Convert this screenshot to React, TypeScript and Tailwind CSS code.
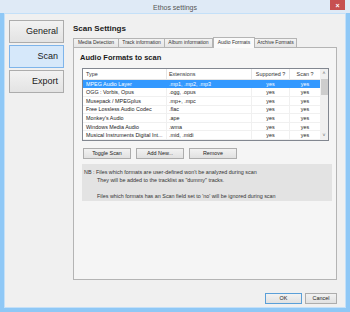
const rows = [
  { type: 'MPEG Audio Layer', ext: '.mp1, .mp2, .mp3' },
  { type: 'OGG : Vorbis, Opus', ext: '.ogg, .opus' },
  { type: 'Musepack / MPEGplus', ext: '.mp+, .mpc' },
  { type: 'Free Lossless Audio Codec', ext: '.flac' },
  { type: "Monkey's Audio", ext: '.ape' },
  { type: 'Windows Media Audio', ext: '.wma' },
  { type: 'Musical Instruments Digital Int...', ext: '.mid, .midi' },
]

const tabs = [
  { label: 'Media Detection', w: 'w-[46px]' },
  { label: 'Track information', w: 'w-[47px]' },
  { label: 'Album information', w: 'w-[49px]' },
]

function NavButton({ label, active }: { label: string; active?: boolean }) {
  return (
    <div
      className={
        active
          ? 'h-[23px] w-[55px] flex items-center justify-end pr-[5px] border border-[#7eb4ea] bg-[#d6e8fa] text-[9px] text-[#1a1a1a]'
          : 'h-[23px] w-[55px] flex items-center justify-end pr-[5px] border border-[#acacac] bg-gradient-to-b from-[#f2f2f2] to-[#e3e3e3] text-[9px] text-[#1a1a1a]'
      }
    >
      {label}
    </div>
  )
}

function SmallButton({ label, w, def }: { label: string; w: string; def?: boolean }) {
  return (
    <div
      className={`${w} h-[11px] flex items-center justify-center border ${def ? 'border-[#5a9fd8]' : 'border-[#adadad]'} bg-gradient-to-b from-[#f2f2f2] to-[#e1e1e1] text-[5.4px] text-[#222]`}
    >
      {label}
    </div>
  )
}

export default function App() {
  return (
    <div className="w-[350px] h-[312px] flex flex-col bg-[#8fc8f6] overflow-hidden font-['Liberation_Sans',Arial,sans-serif]">
      {/* title bar */}
      <div className="h-[13px] flex items-start bg-[#dfeaf6]">
        <div className="w-[20px]" />
        <div className="flex-1 text-center text-[7px] leading-[7px] pt-[4px] text-[#555]">Ethos settings</div>
        <div className="w-[15px] h-[10px] mr-[5px] bg-[#c75050] flex items-center justify-center text-white text-[7px] leading-none font-bold">
          ×
        </div>
      </div>

      {/* client area */}
      <div className="flex-1 mx-[4px] mb-[4px] border border-[#c4e0f8] bg-[#f0f0f0] flex pl-[4px] pt-[6px]">
        <div className="flex flex-col gap-[2px]">
          <NavButton label="General" />
          <NavButton label="Scan" active />
          <NavButton label="Export" />
        </div>

        <div className="ml-[9px] w-[264px] flex flex-col">
          <div className="h-[17px] pt-[4px] text-[8px] leading-[9px] font-bold text-[#1a1a1a]">Scan Settings</div>

          {/* tabs */}
          <div className="h-[10px] flex items-end">
            {tabs.map((t) => (
              <div
                key={t.label}
                className={`${t.w} h-[9px] flex items-center justify-center border border-b-0 border-[#b4b4b4] bg-gradient-to-b from-[#f3f3f3] to-[#e6e6e6] text-[5px] text-[#333] -mr-px`}
              >
                {t.label}
              </div>
            ))}
            <div className="w-[42px] h-[11px] ml-[1px] flex items-center justify-center border border-b-0 border-[#b4b4b4] bg-[#fafafa] text-[5px] text-[#333] relative top-px">
              Audio Formats
            </div>
            <div className="w-[42px] h-[9px] flex items-center justify-center border border-b-0 border-l-0 border-[#b4b4b4] bg-gradient-to-b from-[#f3f3f3] to-[#e6e6e6] text-[5px] text-[#333]">
              Archive Formats
            </div>
          </div>

          {/* tab page */}
          <div className="h-[233px] border border-[#b4b4b4] bg-[#f5f5f5] flex flex-col pl-[8px]">
            <div className="h-[20px] pt-[5px] pl-[-1px] text-[7.5px] leading-[9px] font-bold text-[#1a1a1a] -ml-[2px]">
              Audio Formats to scan
            </div>

            {/* list view */}
            <div className="w-[247px] h-[73px] border border-[#828790] bg-white flex">
              <div className="flex-1 flex flex-col">
                <div className="h-[11px] flex border-b border-[#e5e5e5] text-[5.4px] text-[#333]">
                  <div className="w-[84px] flex items-center pl-[3px] border-r border-[#e5e5e5]">Type</div>
                  <div className="w-[85px] flex items-center pl-[2px] border-r border-[#e5e5e5]">Extensions</div>
                  <div className="w-[38px] flex items-center justify-center border-r border-[#e5e5e5]">Supported ?</div>
                  <div className="w-[30px] flex items-center justify-center">Scan ?</div>
                </div>
                {rows.map((r, i) => (
                  <div
                    key={r.type}
                    className={`h-[8.6px] flex text-[5.4px] border-b ${
                      i === 0 ? 'bg-[#3399ff] text-white border-[#3399ff]' : 'text-[#222] border-[#f0f0f0]'
                    }`}
                  >
                    <div className={`w-[84px] flex items-center pl-[3px] border-r ${i === 0 ? 'border-[#3399ff]' : 'border-[#f0f0f0]'}`}>
                      {r.type}
                    </div>
                    <div className={`w-[85px] flex items-center pl-[2px] border-r ${i === 0 ? 'border-[#3399ff]' : 'border-[#f0f0f0]'}`}>
                      {r.ext}
                    </div>
                    <div className={`w-[38px] flex items-center justify-center border-r ${i === 0 ? 'border-[#3399ff]' : 'border-[#f0f0f0]'}`}>
                      yes
                    </div>
                    <div className="w-[30px] flex items-center justify-center">yes</div>
                  </div>
                ))}
              </div>
              {/* scrollbar */}
              <div className="w-[8px] bg-[#f0f0f0] flex flex-col items-center">
                <div className="h-[10px] flex items-center text-[5px] text-[#606060]">˄</div>
                <div className="w-[7px] h-[16px] bg-[#cdcdcd]" />
                <div className="flex-1" />
                <div className="h-[8px] flex items-center text-[5px] text-[#606060]">˅</div>
              </div>
            </div>

            {/* buttons */}
            <div className="mt-[7px] ml-[1px] flex gap-[5px]">
              <SmallButton label="Toggle Scan" w="w-[48px]" />
              <SmallButton label="Add New..." w="w-[48px]" />
              <SmallButton label="Remove" w="w-[48px]" />
            </div>

            {/* note */}
            <div className="mt-[5px] w-[250px] h-[37px] bg-[#e3e3e3] pt-[4px] text-[5.4px] leading-[8px] text-[#333]">
              <div className="pl-[2px]">NB : Files which formats are user-defined won't be analyzed during scan</div>
              <div className="pl-[15px]">They will be added to the tracklist as "dummy" tracks.</div>
              <div className="h-[8px]" />
              <div className="pl-[15px]">Files which formats has an Scan field set to 'no' will be ignored during scan</div>
            </div>
          </div>

          {/* dialog buttons */}
          <div className="mt-[13px] flex justify-end gap-[3px]">
            <SmallButton label="OK" w="w-[37px]" def />
            <SmallButton label="Cancel" w="w-[32px]" />
          </div>
        </div>
      </div>
    </div>
  )
}
